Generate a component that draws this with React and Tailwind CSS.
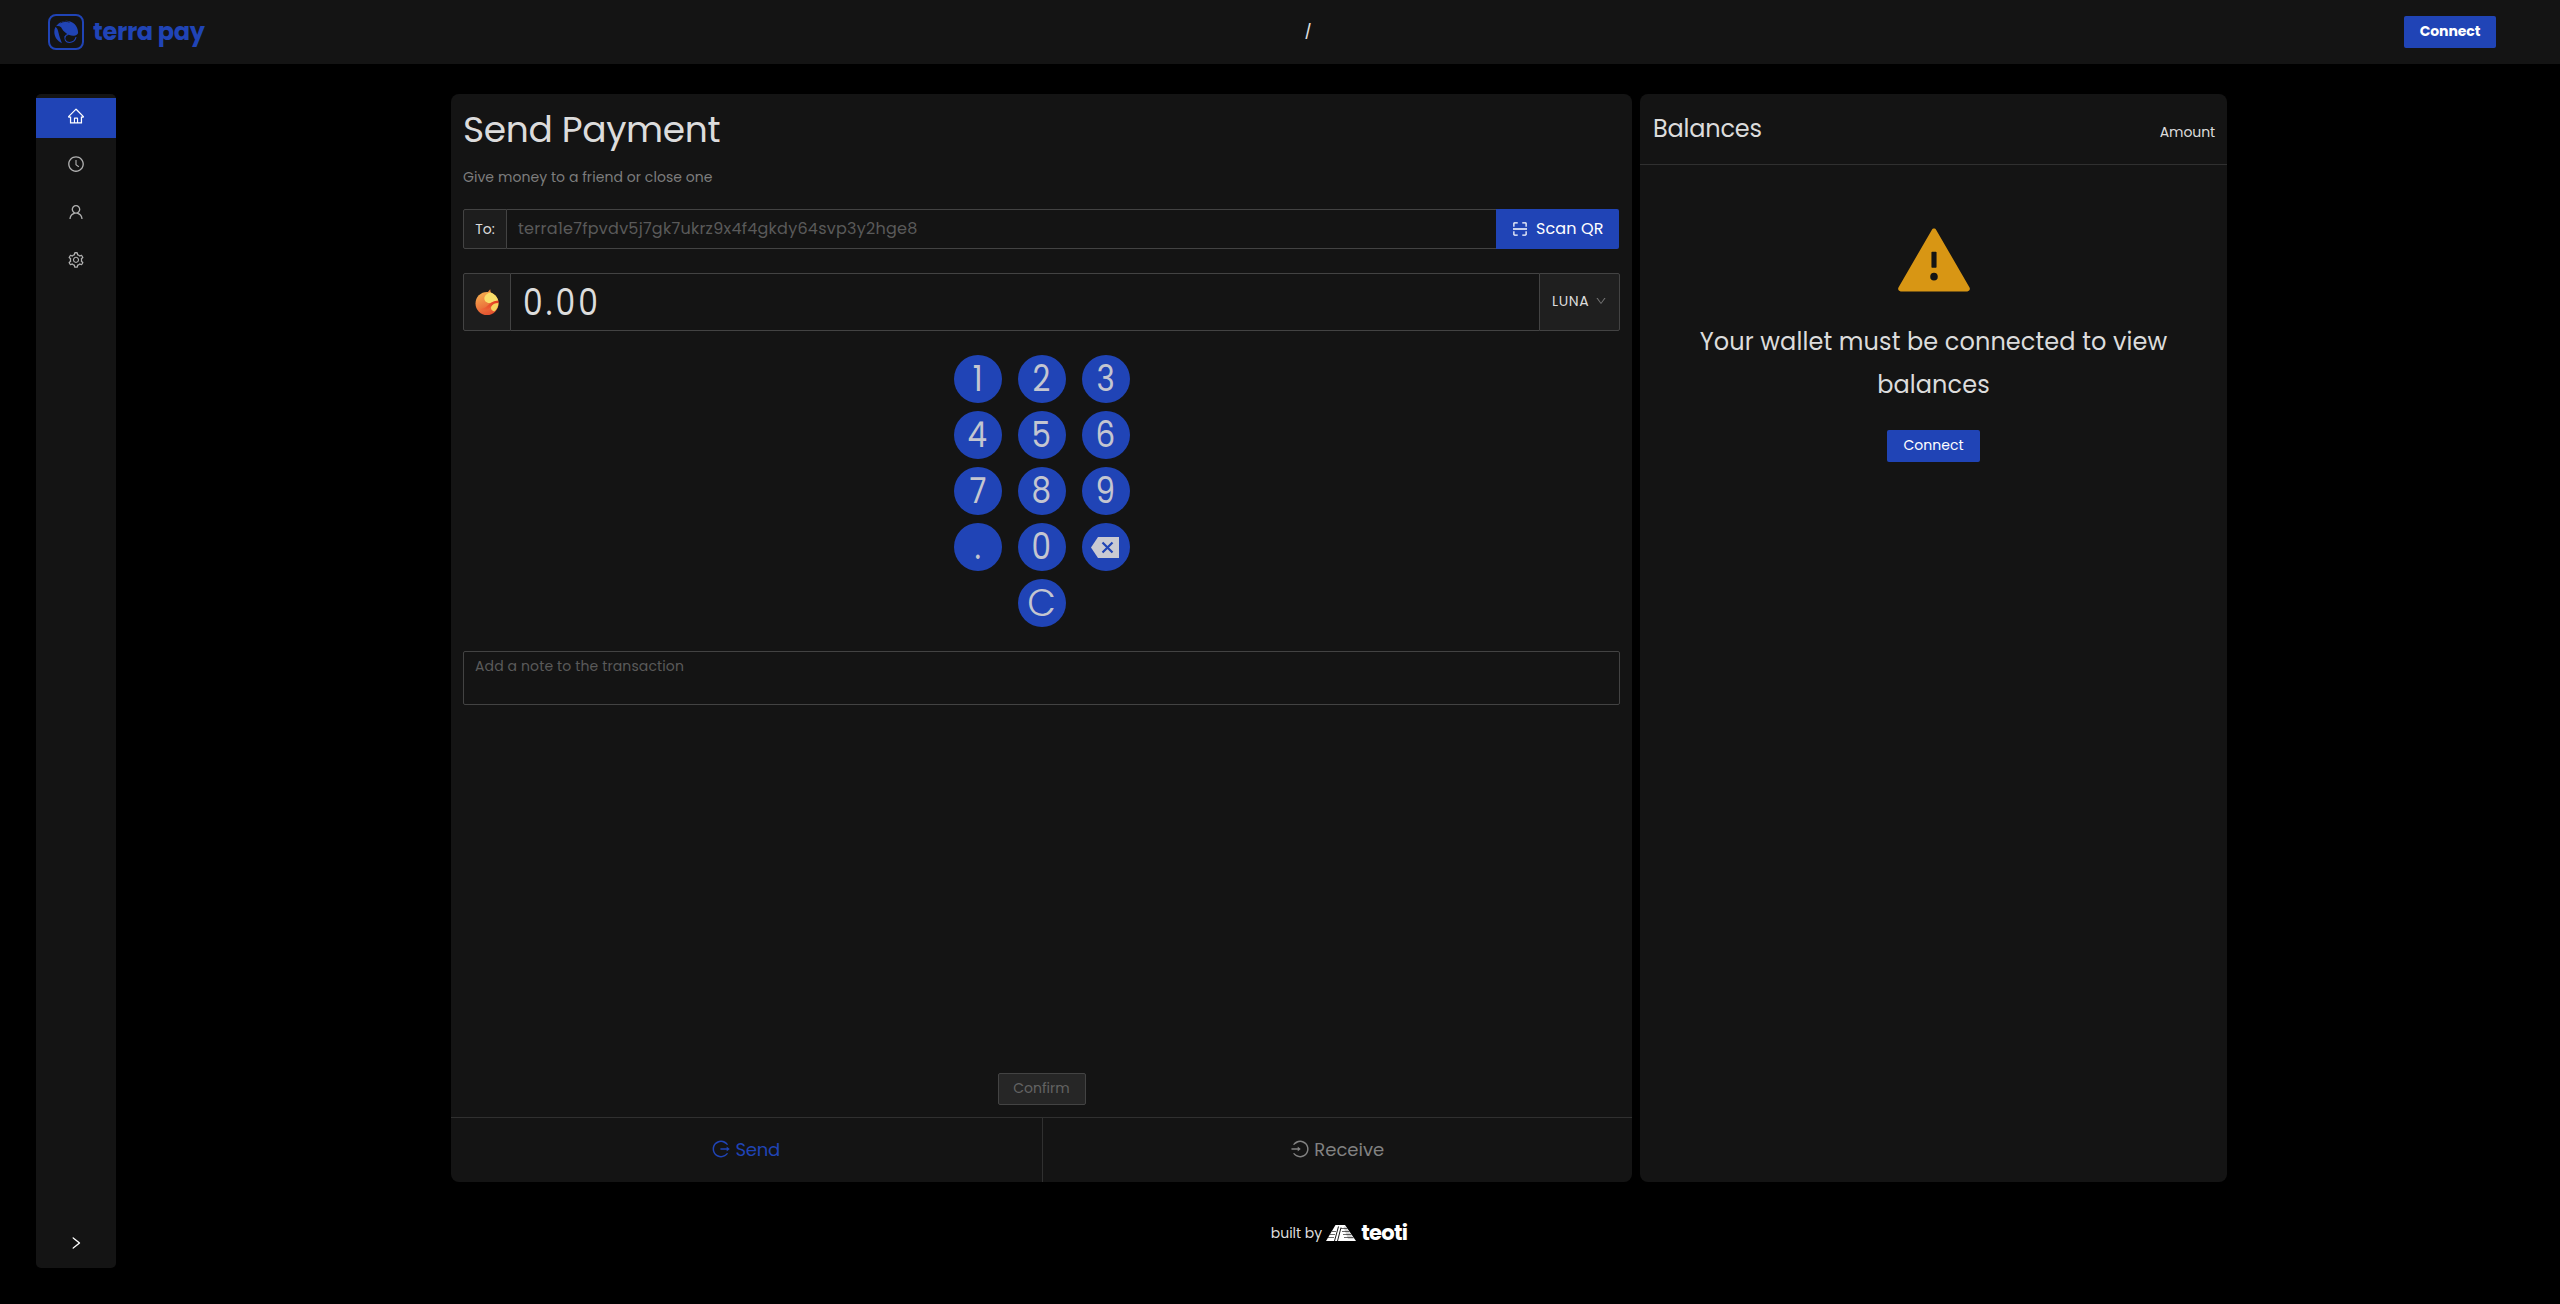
import React from "react";
import {
  AiOutlineHome,
  AiOutlineClockCircle,
  AiOutlineUser,
  AiOutlineSetting,
  AiOutlineScan,
  AiOutlineDown,
  AiOutlineRight,
  AiFillWarning,
  AiOutlineLogin,
  AiOutlineLogout,
} from "react-icons/ai";

function TerraLogo() {
  return (
    <svg className="size-9" viewBox="0 0 36 36" fill="none">
      <rect x="1" y="1" width="34" height="34" rx="7" stroke="#2044b6" strokeWidth="2" />
      <path d="M8 12.2C10.5 8.8 14 6.7 18.3 6.7c6.4 0 11.6 5 11.8 11.5.1 2-2.300 3.700-5 3.600-5.200-.2-10-4.300-12-8.600-1.400-1.200-3.100-1.500-5.100-1z" fill="#2044b6" />
      <path d="M12.500 8.800c3-1.700 6.300-1.700 9-.6" stroke="#141414" strokeWidth=".8" />
      <path d="M7.300 13c1.900.6 2.700 3 3.300 6 .6 3.200 1.800 6 3.300 10.200C9.500 27.200 6.300 22.900 6.300 18c0-1.800.3-3.500 1-5z" fill="#2044b6" />
      <path d="M17.300 22.200c-1.500 3 .5 6.300 4.200 6.300 3.200 0 5.800-2.500 6.600-5.300" stroke="#2044b6" strokeWidth="1.100" />
      <path d="M16.800 23.300c.7-2 2-2.700 3.600-2.900" stroke="#2044b6" strokeWidth="1.100" />
    </svg>
  );
}

function LunaIcon() {
  return (
    <svg className="h-[27px] w-6" viewBox="0 0 24 27">
      <defs>
        <linearGradient id="luna-body" x1="0.2" y1="0" x2="0.6" y2="1">
          <stop offset="0" stopColor="#f6b050" />
          <stop offset="1" stopColor="#e4502f" />
        </linearGradient>
        <linearGradient id="luna-band" x1="0" y1="1" x2="1" y2="0">
          <stop offset="0" stopColor="#ee6b3a" />
          <stop offset="1" stopColor="#e2381f" />
        </linearGradient>
      </defs>
      <path d="M8 5.500 12.500 3.500l2.700-3.200L16 5.500z" fill="#f08a3c" />
      <circle cx="12" cy="14.500" r="11.500" fill="url(#luna-body)" />
      <path d="M9.500 8c1.200-2.400 3.500-4 5.800-4.400 4.200 1.300 7.300 4.700 8 8.300-2.800-.3-5 .9-7.400 1.900C12.500 14.800 8.500 12.500 9.500 8z" fill="#f8de6b" />
      <path d="M23.400 13.500c.3 4-1.700 7.200-4.300 9-2.700-.8-3.700-3-2.800-5.200.9-2.500 3.700-4 7.100-3.800z" fill="#f6d45e" />
      <path d="M5 20c4.500 0 6.500-2.500 9.500-5 2.500-2.200 5.500-3.500 8.800-3.200l.1 2.200c-3.500 0-5.300 1-7.300 3.500-2.500 3.300-7 5-11.100 2.500z" fill="url(#luna-band)" />
    </svg>
  );
}

function BackspaceIcon() {
  return (
    <svg className="mr-[2px] h-[21px] w-7" viewBox="0 0 28 21">
      <path d="M7 0H28V21H7L0 10.500z" fill="#c9cad2" />
      <path d="m11.500 5.500 10 10m0-10-10 10" stroke="#2044b6" strokeWidth="2.200" />
    </svg>
  );
}

function Pyramid() {
  return (
    <svg className="ml-1 h-4 w-[30px]" viewBox="0 0 30 16">
      <path d="M9.500 0h9.500L30 16H0z" fill="#fff" />
      <path d="M17.500 2.500 22 14h6L19 1z" fill="#d4d4d4" />
      <path d="M15 3.500h6.500M16 6.500h7.500M17 9.500h8.500M18 12.500h9.500M6 6.500h4M4 9.500h5M2 12.500h6" stroke="#000" strokeWidth=".6" />
      <path d="M12.500 1.500 8.500 16M15 2.500l-3.500 13.500" stroke="#000" strokeWidth=".9" />
    </svg>
  );
}

const navItems = [AiOutlineHome, AiOutlineClockCircle, AiOutlineUser, AiOutlineSetting];
const keys = ["1", "2", "3", "4", "5", "6", "7", "8", "9", ".", "0", "back", "", "C"];

function Sidebar() {
  return (
    <aside className="ml-9 flex h-[1174px] w-20 flex-col rounded-[5px] bg-[#141414] pt-1">
      <nav className="flex flex-col gap-2">
        {navItems.map((Icon, i) => (
          <a
            key={i}
            className={
              i === 0
                ? "flex h-10 items-center justify-center bg-[#2044b6] pb-1 text-white"
                : "flex h-10 items-center justify-center pb-1 text-[#b0b0b0]"
            }
          >
            <Icon size={18} />
          </a>
        ))}
      </nav>
      <button className="mt-auto flex h-[50px] items-center justify-center text-white">
        <AiOutlineRight size={16} />
      </button>
    </aside>
  );
}

function KeyLabel({ value }) {
  if (value === "back") return <BackspaceIcon />;
  if (value === "C") return <span className="text-[37px] font-light">C</span>;
  return <span className="inline-block scale-x-[0.86]">{value}</span>;
}

function SendCard() {
  return (
    <section className="flex h-[1088px] w-[1181px] flex-col rounded-lg bg-[#141414]">
      <div className="flex flex-col px-3 pt-[11px]">
        <h1 className="text-[36px] leading-[49px] tracking-[-0.35px] text-[#dcdcdc]">Send Payment</h1>
        <p className="mt-[11px] text-sm leading-6 tracking-[0.06px] text-[#7d7d7d]">Give money to a friend or close one</p>

        <div className="mt-5 flex h-10">
          <div className="flex w-11 items-center justify-center rounded-l-[2px] border border-[#434343] bg-[#1d1d1d] text-sm text-[#dcdcdc]">
            To:
          </div>
          <div className="flex flex-1 items-center border-y border-[#434343] px-[11px] text-base tracking-[0.25px] text-[#5a5a5a]">
            terra1e7fpvdv5j7gk7ukrz9x4f4gkdy64svp3y2hge8
          </div>
          <button className="flex w-[123px] items-center gap-[7px] rounded-r-[2px] bg-[#2044b6] pl-[15px] text-base tracking-[0.1px] text-white mr-px">
            <AiOutlineScan size={18} />
            Scan QR
          </button>
        </div>

        <div className="mt-6 flex h-[58px]">
          <div className="flex w-12 items-center justify-center rounded-l-[2px] border border-[#434343] bg-[#1d1d1d]">
            <LunaIcon />
          </div>
          <div className="flex flex-1 items-center border-y border-[#434343] px-3 pt-px text-[36px] text-[#dcdcdc]">
            <span className="inline-block origin-left scale-x-[0.87] tracking-[3.6px]">0.00</span>
          </div>
          <div className="flex w-[81px] items-center rounded-r-[2px] border border-[#434343] bg-[#1f1f1f] pb-[2px] pl-3 text-sm tracking-[0.6px] text-[#dcdcdc]">
            LUNA
            <AiOutlineDown size={12} className="ml-[6px] text-[#737373]" />
          </div>
        </div>

        <div className="mx-auto mt-6 grid grid-cols-[48px_48px_48px] gap-x-4 gap-y-2">
          {keys.map((k, i) =>
            k === "" ? (
              <span key={i} />
            ) : (
              <button
                key={i}
                className="flex size-12 items-center justify-center rounded-full bg-[#2044b6] text-[36px] leading-[48px] text-[#c4c6d0]"
              >
                <KeyLabel value={k} />
              </button>
            )
          )}
        </div>

        <div className="mt-6 h-[54px] rounded-[2px] border border-[#434343] px-[11px] pt-[3px] text-sm leading-[22px] tracking-[0.12px] text-[#5a5a5a]">
          Add a note to the transaction
        </div>
      </div>

      <button className="mx-auto mt-auto mb-3 h-8 w-[88px] rounded-[2px] border border-[#434343] bg-[#262626] pb-[2px] text-sm leading-[28px] text-[#636363]">
        Confirm
      </button>
      <div className="flex h-[65px] border-t border-[#303030] text-lg">
        <div className="flex flex-1 items-center justify-center gap-1 border-r border-[#303030] pr-px tracking-[-0.2px] text-[#2044b6]">
          <AiOutlineLogout size={20} className="relative -top-px" />
          Send
        </div>
        <div className="flex flex-1 items-center justify-center gap-1 text-[#828282]">
          <AiOutlineLogin size={20} className="relative -top-px" />
          Receive
        </div>
      </div>
    </section>
  );
}

function BalancesCard() {
  return (
    <section className="h-[1088px] w-[587px] rounded-lg bg-[#141414]">
      <header className="flex h-[71px] items-baseline justify-between border-b border-[#303030] px-3 pt-[13px] text-[#dcdcdc]">
        <h2 className="pl-px text-2xl leading-[43px] tracking-[-0.2px]">Balances</h2>
        <span className="text-sm tracking-[-0.1px]">Amount</span>
      </header>
      <div className="flex flex-col items-center pt-[54px]">
        <AiFillWarning size={82} className="text-[#d89614]" />
        <p className="mt-[19px] w-[500px] text-center text-2xl leading-[43px] tracking-[0.1px] text-[#dcdcdc]">
          Your wallet must be connected to view balances
        </p>
        <button className="mt-6 h-8 w-[93px] rounded-[2px] bg-[#2044b6] pb-[2px] text-sm leading-[30px] text-white">Connect</button>
      </div>
    </section>
  );
}

export default function App() {
  return (
    <div className="flex h-[1304px] w-[2560px] flex-col overflow-hidden bg-black font-['Poppins','Inter',sans-serif]">
      <header className="grid h-16 grid-cols-[1fr_auto_1fr] items-center bg-[#141414] pr-16 pl-12">
        <div className="flex items-center gap-[9px] text-2xl font-bold tracking-[-0.3px] text-[#2044b6]">
          <TerraLogo />
          terra pay
        </div>
        <span className="pl-[72px] text-sm font-medium text-[#dcdcdc]">/</span>
        <button className="h-8 w-[92px] justify-self-end rounded-[2px] bg-[#2044b6] pb-[2px] text-sm leading-[30px] font-bold tracking-[-0.1px] text-white">
          Connect
        </button>
      </header>
      <div className="flex pt-[30px]">
        <Sidebar />
        <main className="ml-[335px] flex flex-col">
          <div className="flex gap-2">
            <SendCard />
            <BalancesCard />
          </div>
          <footer className="mt-10 flex h-[22px] items-center justify-center text-sm text-[#dcdcdc]">
            built by
            <Pyramid />
            <span className="ml-[5px] text-[21px] font-bold tracking-[-0.7px] text-white">teoti</span>
          </footer>
        </main>
      </div>
    </div>
  );
}
